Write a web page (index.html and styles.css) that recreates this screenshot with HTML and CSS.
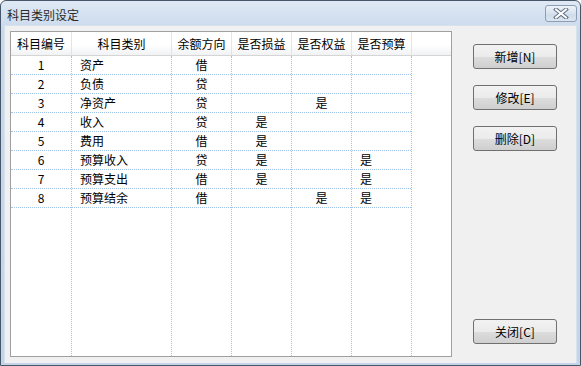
FILE: index.html
```html
<!DOCTYPE html>
<html lang="zh-CN">
<head>
    <meta charset="UTF-8">
    <title>科目类别设定</title>
    <link rel="stylesheet" href="styles.css">
</head>
<body>
    <div class="window">
        <div class="titlebar">
            <span class="title">科目类别设定</span>
            <button class="close-x" title="关闭">
                <svg width="16" height="11" viewBox="0 0 16 11">
                    <path d="M3 1.5 L13 9.5 M13 1.5 L3 9.5" stroke="#5b6b80" stroke-width="4" stroke-linecap="square" fill="none"/>
                    <path d="M3 1.5 L13 9.5 M13 1.5 L3 9.5" stroke="#ffffff" stroke-width="2" stroke-linecap="square" fill="none"/>
                </svg>
            </button>
        </div>

        <div class="client">
            <!-- 科目类别列表 -->
            <div class="grid">
                <div class="grid-head">
                    <div class="hcell w-no">科目编号</div>
                    <div class="hcell w-name">科目类别</div>
                    <div class="hcell w-s">余额方向</div>
                    <div class="hcell w-s">是否损益</div>
                    <div class="hcell w-s">是否权益</div>
                    <div class="hcell w-s">是否预算</div>
                    <div class="hcell w-rest"></div>
                </div>
                <div class="grid-body">
                    <div class="col w-no center">
                        <div class="cell">1</div><div class="cell">2</div><div class="cell">3</div><div class="cell">4</div>
                        <div class="cell">5</div><div class="cell">6</div><div class="cell">7</div><div class="cell">8</div>
                    </div>
                    <div class="col w-name left">
                        <div class="cell">资产</div><div class="cell">负债</div><div class="cell">净资产</div><div class="cell">收入</div>
                        <div class="cell">费用</div><div class="cell">预算收入</div><div class="cell">预算支出</div><div class="cell">预算结余</div>
                    </div>
                    <div class="col w-s center">
                        <div class="cell">借</div><div class="cell">贷</div><div class="cell">贷</div><div class="cell">贷</div>
                        <div class="cell">借</div><div class="cell">贷</div><div class="cell">借</div><div class="cell">借</div>
                    </div>
                    <div class="col w-s center">
                        <div class="cell"></div><div class="cell"></div><div class="cell"></div><div class="cell">是</div>
                        <div class="cell">是</div><div class="cell">是</div><div class="cell">是</div><div class="cell"></div>
                    </div>
                    <div class="col w-s center">
                        <div class="cell"></div><div class="cell"></div><div class="cell">是</div><div class="cell"></div>
                        <div class="cell"></div><div class="cell"></div><div class="cell"></div><div class="cell">是</div>
                    </div>
                    <div class="col w-s left">
                        <div class="cell"></div><div class="cell"></div><div class="cell"></div><div class="cell"></div>
                        <div class="cell"></div><div class="cell">是</div><div class="cell">是</div><div class="cell">是</div>
                    </div>
                    <div class="col w-rest"></div>
                </div>
            </div>

            <!-- 操作按钮 -->
            <div class="actions">
                <button class="btn">新增[N]</button>
                <button class="btn">修改[E]</button>
                <button class="btn">删除[D]</button>
                <button class="btn btn-close">关闭[C]</button>
            </div>
        </div>
    </div>
</body>
</html>
```

FILE: styles.css
```css
body {
    margin: 0;
    font-family: "Noto Sans CJK SC", "DejaVu Sans", sans-serif;
    font-size: 12px;
    color: #000;
    background: #fff;
}
.window {
    width: 581px;
    height: 366px;
    box-sizing: border-box;
    border: 1px solid #48566a;
    border-radius: 6px 6px 0 0;
    background: linear-gradient(#dfe9f5, #c9d9ec 30px, #c4d5e9);
    padding: 0 3px 2px 3px;
    display: flex;
    flex-direction: column;
}
.titlebar {
    height: 24px;
    display: flex;
    align-items: flex-start;
    justify-content: space-between;
}
.title {
    padding: 4px 0 0 3px;
    line-height: 20px;
    font-size: 12px;
    color: #2b2b2b;
}
.close-x {
    margin-top: 4px;
    width: 32px;
    height: 17px;
    padding: 0;
    border: 1px solid #8d9db3;
    border-radius: 3px;
    background: linear-gradient(#edf2f8, #d9e3ef 50%, #cfdbe9 51%, #dbe5f1);
    display: flex;
    align-items: center;
    justify-content: center;
}
.client {
    flex: 1;
    background: #f0f0f0;
    display: flex;
    padding: 5px 6px 6px 5px;
    border: 1px solid #d7e2ef;
    border-bottom: none;
}
.grid {
    width: 442px;
    box-sizing: border-box;
    border: 1px solid #a0a0a0;
    background: #fff;
    display: flex;
    flex-direction: column;
}
.grid-head {
    display: flex;
    height: 23px;
    border-bottom: 1px solid #d5d5d5;
    background: linear-gradient(#ffffff, #ffffff 55%, #f1f2f4);
}
.hcell {
    box-sizing: border-box;
    border-right: 1px solid #e3e4e6;
    text-align: center;
    line-height: 23px;
    font-size: 12px;
}
.w-no {
    width: 61px;
}
.w-name {
    width: 100px;
}
.w-s {
    width: 60px;
}
.w-rest {
    flex: 1;
    border-right: none;
}
.grid-body {
    flex: 1;
    display: flex;
}
.col {
    box-sizing: border-box;
    border-right: 1px dotted #9ec3e6;
}
.col.w-rest {
    border-right: none;
}
.cell {
    height: 18px;
    line-height: 18px;
    border-bottom: 1px dotted #9ec3e6;
    white-space: nowrap;
}
.center .cell {
    text-align: center;
}
.left .cell {
    padding-left: 8px;
}
.actions {
    margin-left: 21px;
    padding: 13px 0;
    display: flex;
    flex-direction: column;
    align-items: flex-start;
}
.btn {
    width: 84px;
    height: 25px;
    margin-bottom: 16px;
    padding: 0;
    border: 1px solid #707070;
    border-radius: 3px;
    background: linear-gradient(#f2f2f2, #ebebeb 50%, #dddddd 51%, #cfcfcf);
    font-family: "Noto Sans CJK SC", "DejaVu Sans", sans-serif;
    font-size: 12px;
    color: #000;
    cursor: pointer;
}
.btn:hover {
    background: linear-gradient(#eaf6fd, #d9f0fc 50%, #bee6fd 51%, #a7d9f5);
}
.btn-close {
    margin-top: auto;
    margin-bottom: 0;
}
```
